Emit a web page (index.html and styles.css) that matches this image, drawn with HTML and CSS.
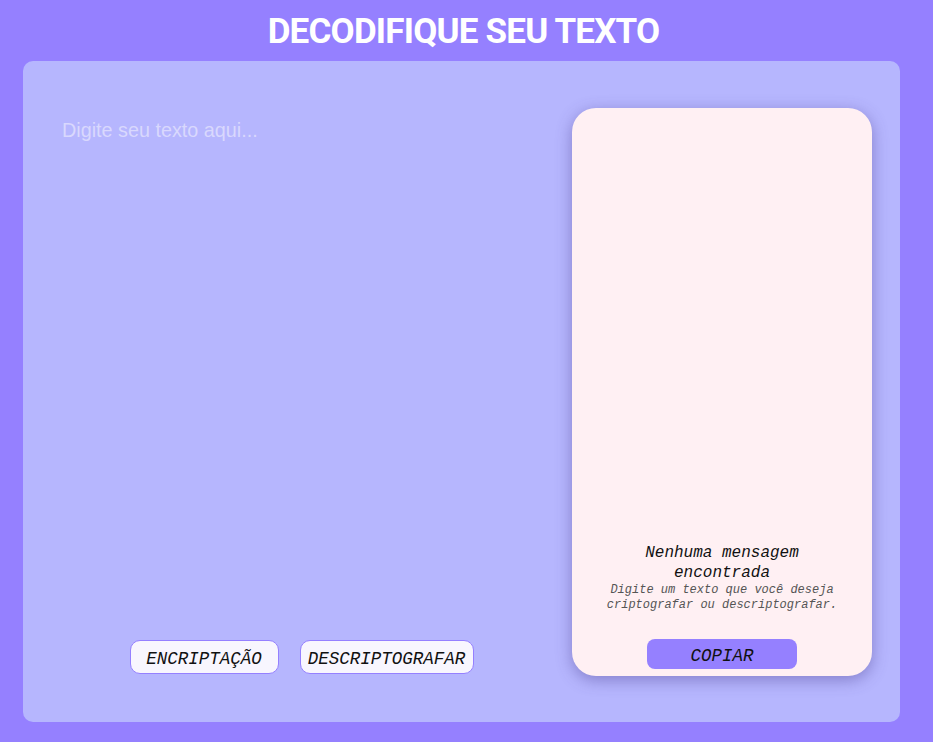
FILE: index.html
```html
<!DOCTYPE html>
<html lang="pt-BR">
<head>
<meta charset="utf-8">
<title>Decodifique seu texto</title>
<link rel="stylesheet" href="styles.css">
</head>
<body>
<h1 class="title">DECODIFIQUE SEU TEXTO</h1>
<main class="panel">
  <section class="editor">
    <textarea class="input" placeholder="Digite seu texto aqui..."></textarea>
    <div class="actions">
      <button class="btn">ENCRIPTAÇÃO</button>
      <button class="btn">DESCRIPTOGRAFAR</button>
    </div>
  </section>
  <aside class="output">
    <h2 class="output-title">Nenhuma mensagem encontrada</h2>
    <p class="output-text">Digite um texto que você deseja criptografar ou descriptografar.</p>
    <button class="copy">COPIAR</button>
  </aside>
</main>
</body>
</html>
```
FILE: styles.css
```css
* { box-sizing: border-box; }
html, body { margin: 0; height: 100%; }
body {
  background: #9580ff;
  font-family: "Liberation Mono", monospace;
}
.title {
  margin: 0;
  height: 61px;
  line-height: 63px;
  text-align: center;
  color: #ffffff;
  font-family: Roboto, "Liberation Sans", sans-serif;
  font-weight: 700;
  font-size: 35px;
  letter-spacing: -0.8px;
  padding-right: 6px;
}
.panel {
  margin: 0 33px 0 23px;
  height: 661px;
  background: #b6b6fe;
  border-radius: 10px;
  display: flex;
  padding: 47px 28px 46px 39px;
  gap: 31px;
}
.editor {
  flex: 1;
  display: flex;
  flex-direction: column;
}
.input {
  flex: 1;
  border: none;
  outline: none;
  resize: none;
  background: transparent;
  padding: 11px 0 0 0;
  font-family: "Liberation Sans", Arial, sans-serif;
  font-size: 19.8px;
  color: #333;
}
.input::placeholder { color: #d9d8fd; }
.actions {
  display: flex;
  justify-content: center;
  gap: 21px;
  margin-bottom: 2px;
}
.btn {
  height: 34px;
  border: 1px solid #9580ff;
  border-radius: 10px;
  background: #f8f6fe;
  font-family: "Liberation Mono", monospace;
  font-style: italic;
  font-size: 17.5px;
  color: #111;
  padding: 3px 5px 0;
}
.btn:first-child { width: 149px; }
.btn:last-child { width: 174px; }
.output {
  width: 300px;
  background: #fff0f3;
  border-radius: 24px;
  box-shadow: 0 4px 16px rgba(70, 60, 140, 0.45);
  display: flex;
  flex-direction: column;
  justify-content: flex-end;
  align-items: center;
  padding: 0 20px 7px;
  text-align: center;
}
.output-title {
  margin: 0;
  width: 180px;
  font-size: 16px;
  font-weight: 400;
  font-style: italic;
  line-height: 20px;
  color: #111;
}
.output-text {
  margin: 0 0 26px;
  font-size: 12px;
  font-style: italic;
  line-height: 15px;
  color: #555;
}
.copy {
  width: 150px;
  height: 30px;
  border: none;
  border-radius: 8px;
  background: #9580ff;
  font-family: "Liberation Mono", monospace;
  font-style: italic;
  font-size: 17.5px;
  color: #111;
  padding: 3px 0 0;
}
```
